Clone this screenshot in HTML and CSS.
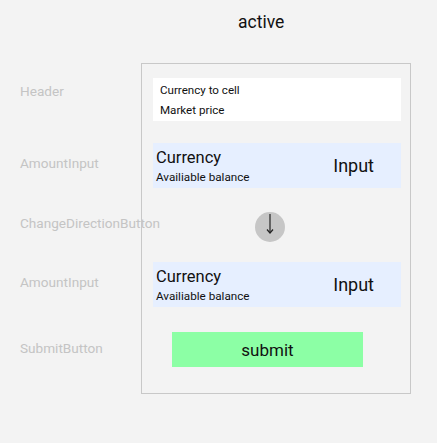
FILE: index.html
```html
<!DOCTYPE html>
<html>
<head>
<meta charset="utf-8">
<link rel="stylesheet" href="styles.css">
</head>
<body>
<div class="page">
  <div class="title">active</div>
  <div class="main">
    <div class="labels">
      <div class="label l-header">Header</div>
      <div class="label l-amount1">AmountInput</div>
      <div class="label l-change">ChangeDirectionButton</div>
      <div class="label l-amount2">AmountInput</div>
      <div class="label l-submit">SubmitButton</div>
    </div>
    <div class="frame">
      <div class="header-box">
        <div class="header-line">Currency to cell</div>
        <div class="header-line">Market price</div>
      </div>
      <div class="amount amount-first">
        <div class="amount-left">
          <div class="currency">Currency</div>
          <div class="balance">Availiable balance</div>
        </div>
        <div class="amount-input">Input</div>
      </div>
      <div class="change-btn">
        <svg width="30" height="30" viewBox="0 0 30 30">
          <line x1="15" y1="2" x2="15" y2="20.5" stroke="#222" stroke-width="1.2"/>
          <polyline points="12,17.5 15,21 18,17.5" fill="none" stroke="#222" stroke-width="1.2"/>
        </svg>
      </div>
      <div class="amount amount-second">
        <div class="amount-left">
          <div class="currency">Currency</div>
          <div class="balance">Availiable balance</div>
        </div>
        <div class="amount-input">Input</div>
      </div>
      <div class="submit">submit</div>
    </div>
  </div>
</div>
</body>
</html>
```

FILE: styles.css
```css
html, body {
  margin: 0;
  padding: 0;
  background: #f3f3f3;
}
body {
  font-family: Roboto, "Liberation Sans", sans-serif;
  color: #111;
}
.page {
  width: 437px;
  height: 443px;
}
.title {
  padding-top: 12px;
  padding-left: 238px;
  font-size: 17.5px;
  line-height: 20px;
}
.main {
  margin-top: 31px;
  display: flex;
  align-items: flex-start;
}
.labels {
  width: 141px;
  padding-left: 20px;
  box-sizing: border-box;
  padding-top: 20px;
  display: flex;
  flex-direction: column;
}
.label {
  font-size: 13.6px;
  line-height: 16px;
  color: #c4c4c4;
  white-space: nowrap;
}
.l-amount1 { margin-top: 56px; }
.l-change { margin-top: 44px; }
.l-amount2 { margin-top: 43px; }
.l-submit { margin-top: 50px; }

.frame {
  width: 270px;
  box-sizing: border-box;
  border: 1px solid #c8c8c8;
  padding: 14px 9px 26px 11px;
  display: flex;
  flex-direction: column;
}
.header-box {
  background: #fff;
  height: 43px;
  box-sizing: border-box;
  padding: 3px 0 0 7px;
  font-size: 11.6px;
  line-height: 19.5px;
}
.amount {
  height: 45px;
  background: #e6efff;
  display: flex;
  justify-content: space-between;
  align-items: center;
  padding: 0 27px 0 3px;
  box-sizing: border-box;
}
.amount-first { margin-top: 22px; }
.amount-second { margin-top: 20px; }
.amount-left {
  align-self: flex-start;
  padding-top: 5px;
}
.currency {
  font-size: 16.5px;
  line-height: 19px;
}
.balance {
  font-size: 11.7px;
  line-height: 21px;
}
.amount-input {
  font-size: 18px;
  line-height: 22px;
}
.change-btn {
  margin-top: 24px;
  margin-left: 102px;
  width: 30px;
  height: 30px;
  border-radius: 50%;
  background: #c6c6c6;
}
.change-btn svg {
  display: block;
}
.submit {
  margin-top: 25px;
  margin-left: 19px;
  width: 191px;
  height: 35px;
  background: #8cffa5;
  display: flex;
  align-items: center;
  justify-content: center;
  font-size: 17px;
}
```
